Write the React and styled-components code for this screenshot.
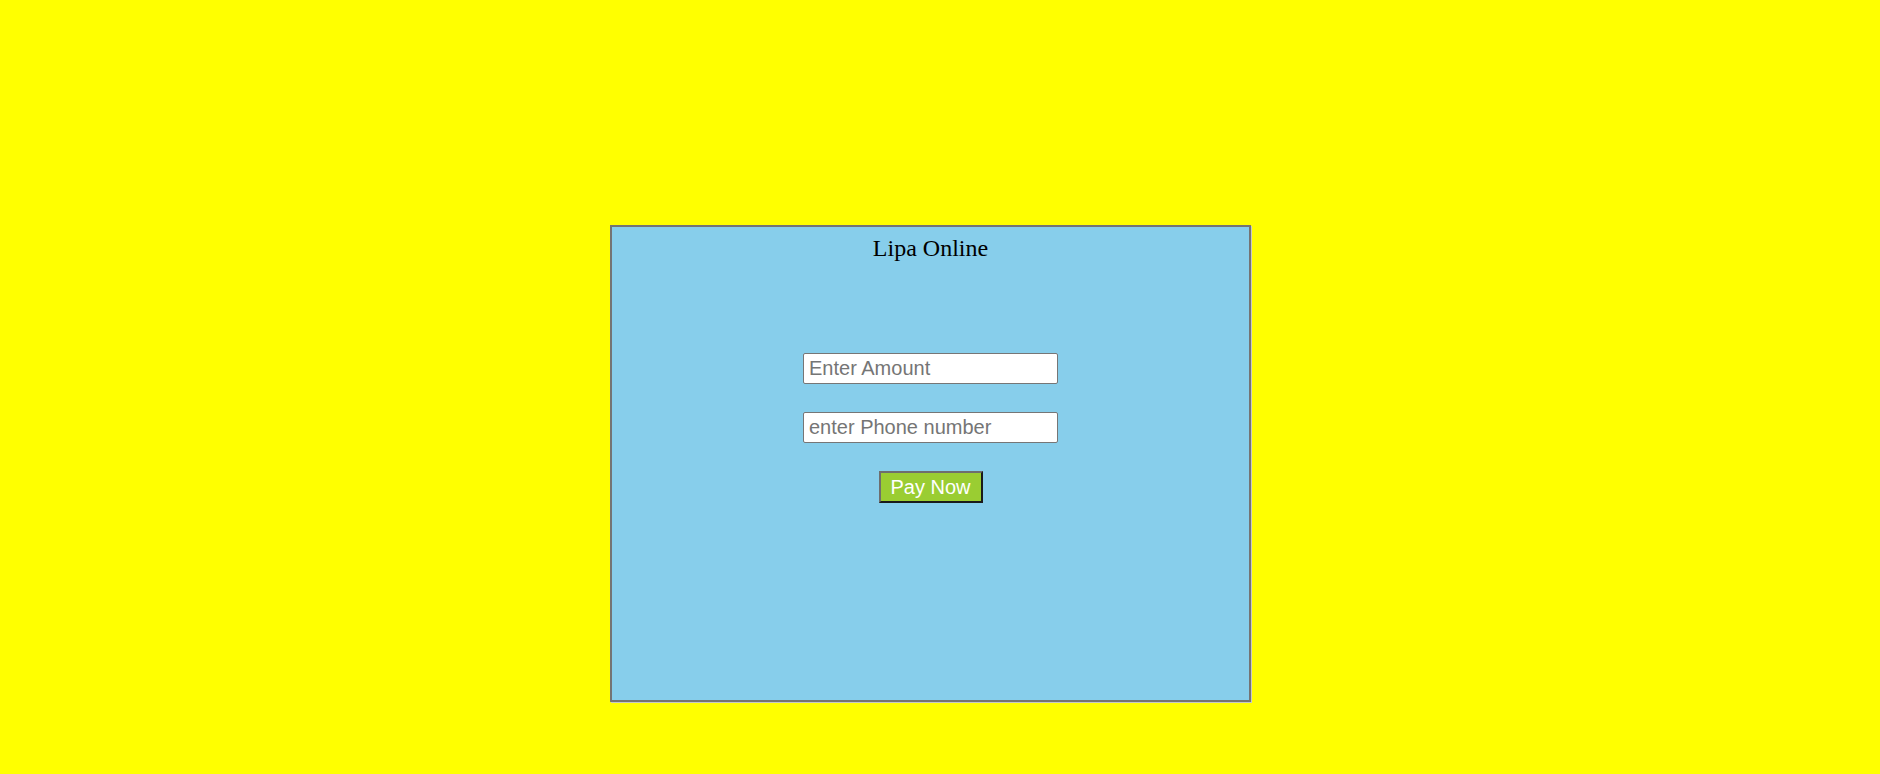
import React from "react";
import styled, { createGlobalStyle } from "styled-components";

const Global = createGlobalStyle`
  html, body { margin: 0; padding: 0; background: #ffff00; }
  body { font-family: "Liberation Serif", "Times New Roman", serif; }
`;

const Page = styled.div`
  min-height: 774px;
  background: #ffff00;
  padding: 225px 0 0 610px;
  box-sizing: border-box;
`;

const Card = styled.div`
  width: 641px;
  height: 477px;
  box-sizing: border-box;
  background: #87ceeb;
  border: 2px solid #747474;
  box-shadow: 1px 1px 0 #c8c8c8;
  display: flex;
  flex-direction: column;
  align-items: center;
`;

const Title = styled.div`
  margin-top: 8px;
  font-family: "Liberation Serif", "Times New Roman", serif;
  font-size: 24px;
  line-height: 27px;
  color: #000;
`;

const Form = styled.form`
  margin-top: 91px;
  display: flex;
  flex-direction: column;
  align-items: center;
`;

const Field = styled.input`
  width: 255px;
  height: 31px;
  box-sizing: border-box;
  margin: 0 0 ${(p) => p.$gap}px;
  padding: 1px 5px;
  border: 1px solid #767676;
  border-radius: 2px;
  background: #fff;
  font-family: "Liberation Sans", Arial, sans-serif;
  font-size: 20px;
  color: #000;
  outline: none;
  &::placeholder { color: #757575; }
`;

const PayButton = styled.button`
  width: 104px;
  height: 32px;
  box-sizing: border-box;
  padding: 0;
  white-space: nowrap;
  border-style: solid;
  border-width: 2px;
  border-color: #6e6e6e #1a1a1a #1a1a1a #6e6e6e;
  background: #9acd32;
  color: #fff;
  font-family: "Liberation Sans", Arial, sans-serif;
  font-size: 20px;
  line-height: 24px;
  cursor: pointer;
`;

export default function App() {
  return (
    <>
      <Global />
      <Page>
        <Card>
          <Title>Lipa Online</Title>
          <Form onSubmit={(e) => e.preventDefault()}>
            <Field type="text" placeholder="Enter Amount" $gap={28} />
            <Field type="text" placeholder="enter Phone number" $gap={28} />
            <PayButton type="submit">Pay Now</PayButton>
          </Form>
        </Card>
      </Page>
    </>
  );
}
